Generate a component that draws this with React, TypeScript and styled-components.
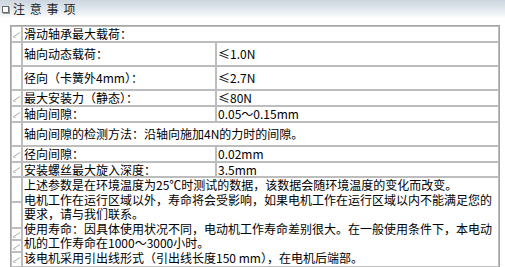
import React from 'react'
import styled, { createGlobalStyle } from 'styled-components'

const GlobalStyle = createGlobalStyle`
  html, body {
    margin: 0;
    padding: 0;
    background: #ffffff;
  }
  body {
    font-family: "Noto Sans CJK SC", "Liberation Sans", sans-serif;
    font-size: 12px;
    color: #000;
  }
`

const TitleBar = styled.div`
  height: 18px;
  display: flex;
  align-items: center;
  gap: 3px;
  padding-left: 2px;
  background: linear-gradient(#ccd6de 0%, #dfe6ec 45%, #f3f6f8 85%, #ffffff 100%);
  color: #222;
  font-size: 12px;
  letter-spacing: 4.8px;
  line-height: 14px;
`

const CheckBox = styled.span`
  width: 5px;
  height: 5px;
  border: 1px solid #6a6a6a;
  background: #fff;
  box-shadow: 1px 1px 0 #9a9a9a;
  flex: none;
  margin-right: 1px;
`

const Sheet = styled.div`
  margin: 7px 0 0 10px;
  width: 490px;
  box-sizing: border-box;
  border: 1px solid #a4a4a4;
`

const Row = styled.div<{ $h?: number }>`
  display: grid;
  grid-template-columns: 11px 194px 283px;
  height: ${p => (p.$h ? `${p.$h}px` : 'auto')};
`

const Cell = styled.div<{ $span?: boolean }>`
  box-sizing: border-box;
  border: 1px solid #bdbdbd;
  padding: 0 1px;
  display: flex;
  align-items: center;
  line-height: 12px;
  white-space: nowrap;
  overflow: hidden;
  grid-column: ${p => (p.$span ? 'span 2' : 'auto')};
`

const MarkerCell = styled.div<{ $h?: number }>`
  box-sizing: border-box;
  border: 1px solid #bdbdbd;
  display: flex;
  align-items: center;
  justify-content: center;
  height: ${p => (p.$h ? `${p.$h}px` : 'auto')};
  flex: ${p => (p.$h ? 'none' : '1')};
`

const MarkerStack = styled.div`
  display: flex;
  flex-direction: column;
`

const NotesCell = styled.div`
  box-sizing: border-box;
  border: 1px solid #bdbdbd;
  padding: 0 1px;
  grid-column: span 2;
  line-height: 14.6px;

  p {
    margin: 0;
  }
`

const Bullet = () => (
  <svg width="9" height="7" viewBox="0 0 9 7">
    <path d="M1 6 L8 1.5" stroke="#adadad" strokeWidth="1" fill="none" />
    <path d="M1 6.5 H4" stroke="#d0d0d0" strokeWidth="1" fill="none" />
  </svg>
)

const specs: { h: number; icon: boolean; label: string; value?: string }[] = [
  { h: 16, icon: true, label: '滑动轴承最大载荷：' },
  { h: 24, icon: false, label: '轴向动态载荷：', value: '≤1.0N' },
  { h: 24, icon: false, label: '径向（卡簧外4mm）：', value: '≤2.7N' },
  { h: 16, icon: true, label: '最大安装力（静态）：', value: '≤80N' },
  { h: 16, icon: true, label: '轴向间隙：', value: '0.05～0.15mm' },
  { h: 24, icon: false, label: '轴向间隙的检测方法：沿轴向施加4N的力时的间隙。' },
  { h: 16, icon: true, label: '径向间隙：', value: '0.02mm' },
  { h: 15, icon: true, label: '安装螺丝最大旋入深度：', value: '3.5mm' },
]

export default function App() {
  return (
    <>
      <GlobalStyle />
      <TitleBar>
        <CheckBox />
        注意事项
      </TitleBar>
      <Sheet>
        {specs.map(s => (
          <Row key={s.label} $h={s.h}>
            <MarkerCell>{s.icon && <Bullet />}</MarkerCell>
            <Cell $span={s.value === undefined}>{s.label}</Cell>
            {s.value !== undefined && <Cell>{s.value}</Cell>}
          </Row>
        ))}
        <Row>
          <MarkerStack>
            <MarkerCell $h={25} />
            <MarkerCell $h={26} />
            <MarkerCell $h={12}><Bullet /></MarkerCell>
            <MarkerCell $h={12}><Bullet /></MarkerCell>
            <MarkerCell><Bullet /></MarkerCell>
          </MarkerStack>
          <NotesCell>
            <p>上述参数是在环境温度为25℃时测试的数据，该数据会随环境温度的变化而改变。</p>
            <p>电机工作在运行区域以外，寿命将会受影响，如果电机工作在运行区域以内不能满足您的要求，请与我们联系。</p>
            <p>使用寿命：因具体使用状况不同，电动机工作寿命差别很大。在一般使用条件下，本电动机的工作寿命在1000～3000小时。</p>
            <p>该电机采用引出线形式（引出线长度150 mm），在电机后端部。</p>
          </NotesCell>
        </Row>
      </Sheet>
    </>
  )
}
